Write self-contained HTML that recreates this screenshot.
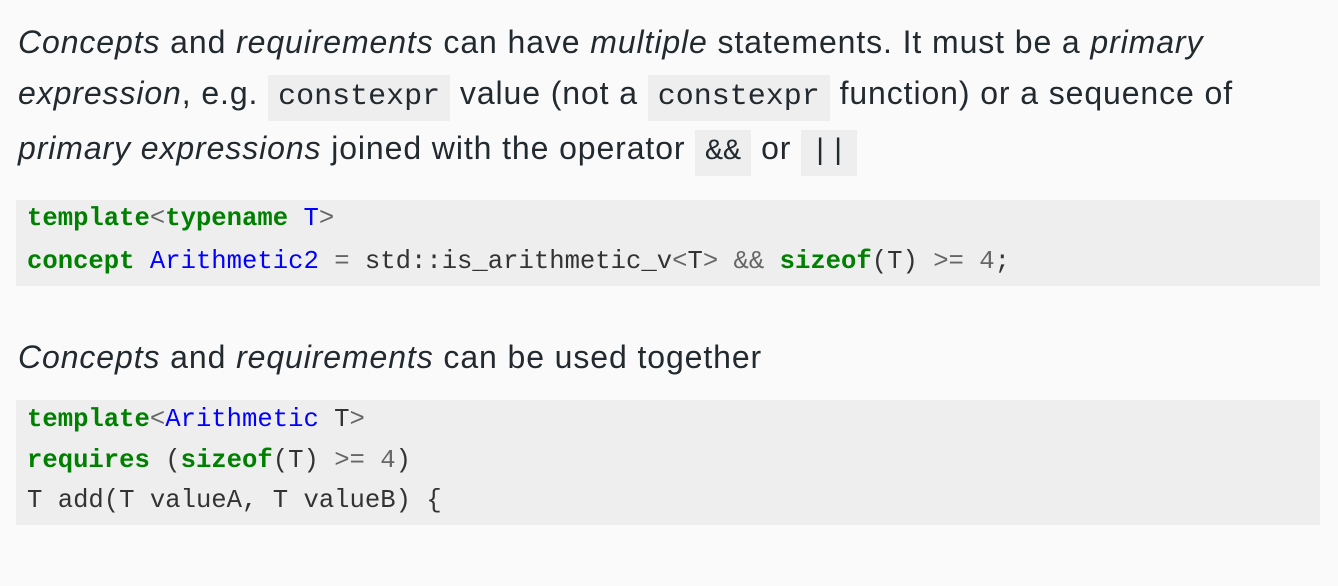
<!DOCTYPE html>
<html><head><style>
body{margin:0;width:1338px;height:586px;background:#fafafa;color:#222a2f;font-family:"Liberation Sans",sans-serif;overflow:hidden;position:relative}
.l{position:absolute;left:18px;font-size:32px;letter-spacing:0.9px;white-space:nowrap;line-height:40px}
.c{font-family:"Liberation Mono",monospace;background:#eeeeee;padding:5px 10px 7px;font-size:30px;letter-spacing:0}
.b{position:absolute;left:16px;width:1304px;background:#eeeeee}
.cl{position:absolute;left:27px;font-family:"Liberation Mono",monospace;font-size:25.6px;white-space:pre;color:#333;line-height:30px}
.k{color:#008000;font-weight:bold}.t{color:#0000ff}.o{color:#666}
</style></head><body>
<div class="l" style="top:22px"><i>Concepts</i> and <i>requirements</i> can have <i>multiple</i> statements. It must be a <i>primary</i></div>
<div class="l" style="top:73px"><i>expression</i>, e.g. <span class="c">constexpr</span> value (not a <span class="c">constexpr</span> function) or a sequence of</div>
<div class="l" style="top:128px"><i>primary expressions</i> joined with the operator <span class="c">&amp;&amp;</span> or <span class="c">||</span></div>
<div class="b" style="top:200px;height:86px"></div>
<div class="cl" style="top:204px"><span class="k">template</span><span class="o">&lt;</span><span class="k">typename</span> <span class="t">T</span><span class="o">&gt;</span></div>
<div class="cl" style="top:247px"><span class="k">concept</span> <span class="t">Arithmetic2</span> <span class="o">=</span> std::is_arithmetic_v<span class="o">&lt;</span>T<span class="o">&gt;</span> <span class="o">&amp;&amp;</span> <span class="k">sizeof</span>(T) <span class="o">&gt;=</span> <span class="o">4</span>;</div>
<div class="l" style="top:337px"><i>Concepts</i> and <i>requirements</i> can be used together</div>
<div class="b" style="top:400px;height:125px"></div>
<div class="cl" style="top:405px"><span class="k">template</span><span class="o">&lt;</span><span class="t">Arithmetic</span> T<span class="o">&gt;</span></div>
<div class="cl" style="top:446px"><span class="k">requires</span> (<span class="k">sizeof</span>(T) <span class="o">&gt;=</span> <span class="o">4</span>)</div>
<div class="cl" style="top:486px">T add(T valueA, T valueB) {</div>
</body></html>
